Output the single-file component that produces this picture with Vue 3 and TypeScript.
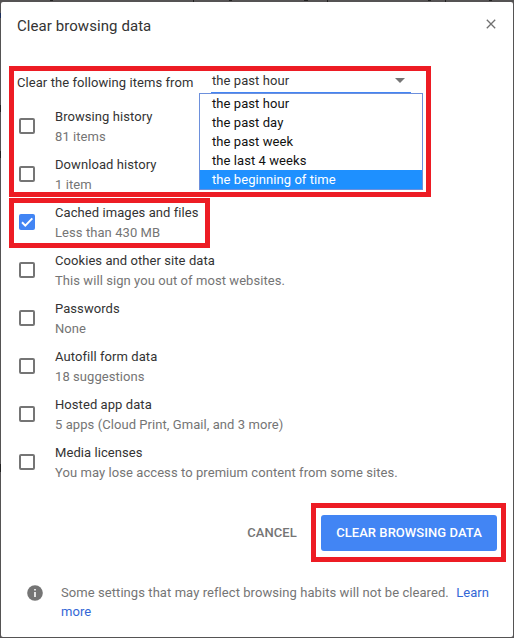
<script setup lang="ts">
import { ref } from 'vue'

interface Item {
  title: string
  detail: string
  checked: boolean
}

const items = ref<Item[]>([
  { title: 'Browsing history', detail: '81 items', checked: false },
  { title: 'Download history', detail: '1 item', checked: false },
  { title: 'Cached images and files', detail: 'Less than 430 MB', checked: true },
  { title: 'Cookies and other site data', detail: 'This will sign you out of most websites.', checked: false },
  { title: 'Passwords', detail: 'None', checked: false },
  { title: 'Autofill form data', detail: '18 suggestions', checked: false },
  { title: 'Hosted app data', detail: '5 apps (Cloud Print, Gmail, and 3 more)', checked: false },
  { title: 'Media licenses', detail: 'You may lose access to premium content from some sites.', checked: false },
])

const periods = ['the past hour', 'the past day', 'the past week', 'the last 4 weeks', 'the beginning of time']
const selected = ref(periods[0])
const highlighted = ref(periods[4])
</script>

<template>
  <div class="backdrop">
    <section class="dialog" role="dialog">
      <header class="header">
        <h1 class="title">Clear browsing data</h1>
        <svg class="close" width="10" height="10" viewBox="0 0 10 10">
          <path d="M.8.8 9.2 9.2M9.2.8.8 9.2" stroke="#707070" stroke-width="1.3" fill="none" />
        </svg>
      </header>

      <div class="period">
        <span class="period-label">Clear the following items from</span>
        <div class="select">
          <span class="select-value">{{ selected }}</span>
          <svg class="arrow" width="10" height="5" viewBox="0 0 10 5"><path d="M0 0h10L5 5z" fill="#757575" /></svg>
          <ul class="menu">
            <li
              v-for="period in periods"
              :key="period"
              class="option"
              :class="{ active: period === highlighted }"
              @mouseenter="highlighted = period"
              @click="selected = period"
            >{{ period }}</li>
          </ul>
        </div>
      </div>

      <ul class="items">
        <li v-for="item in items" :key="item.title" class="item" @click="item.checked = !item.checked">
          <span class="checkbox" :class="{ checked: item.checked }">
            <svg v-if="item.checked" width="16" height="16" viewBox="0 0 16 16">
              <path d="M3 8.3 6.3 11.6 13.3 4.4" fill="none" stroke="#fff" stroke-width="2" />
            </svg>
          </span>
          <div class="item-text">
            <div class="item-title">{{ item.title }}</div>
            <div class="item-detail">{{ item.detail }}</div>
          </div>
        </li>
      </ul>

      <div class="actions">
        <button class="button cancel">CANCEL</button>
        <button class="button primary">CLEAR BROWSING DATA</button>
      </div>

      <footer class="footer">
        <svg class="info" width="16" height="16" viewBox="0 0 16 16">
          <circle cx="8" cy="8" r="7.8" fill="#757575" />
          <path d="M7.2 4h1.6v1.6H7.2zM7.2 7.1h1.6V12H7.2z" fill="#fff" />
        </svg>
        <p class="note"><span class="note-text">Some settings that may reflect browsing habits will not be cleared.</span> <a class="link">Learn more</a></p>
      </footer>
    </section>

    <div class="mark mark-period"></div>
    <div class="mark mark-cache"></div>
    <div class="mark mark-submit"></div>
  </div>
</template>

<style>
body {
  margin: 0;
}
</style>

<style scoped>
.backdrop {
  position: relative;
  box-sizing: border-box;
  width: 514px;
  height: 638px;
  padding: 2px 1px 1px;
  overflow: hidden;
  background:
    linear-gradient(#1c2f5c, #1c2f5c) 0 13px / 1px 5px no-repeat,
    linear-gradient(#222, #222) 0 105px / 1px 7px no-repeat,
    linear-gradient(#222, #222) 0 151px / 1px 7px no-repeat,
    linear-gradient(#222, #222) 0 464px / 1px 8px no-repeat,
    linear-gradient(#222, #222) 50px 0 / 3px 1px no-repeat,
    linear-gradient(#222, #222) 193px 0 / 1px 2px no-repeat,
    linear-gradient(#222, #222) 229px 0 / 3px 1px no-repeat,
    linear-gradient(#222, #222) 304px 0 / 4px 1px no-repeat,
    linear-gradient(#222, #222) 327px 0 / 1px 2px no-repeat,
    linear-gradient(#222, #222) 428px 0 / 3px 1px no-repeat,
    linear-gradient(#222, #222) 445px 0 / 1px 2px no-repeat,
    linear-gradient(#222, #222) 489px 0 / 3px 1px no-repeat,
    #555354;
  font-family: Roboto, "Liberation Sans", sans-serif;
  font-size: 13px;
  letter-spacing: 0.07px;
  color: #333;
}
.dialog {
  display: flex;
  flex-direction: column;
  height: 635px;
  border-radius: 2px;
  background: #fff;
}
.header {
  display: flex;
  justify-content: space-between;
  height: 68px;
  padding: 14px 17px 0 16px;
  box-sizing: border-box;
}
.title {
  margin: 0;
  font-size: 15px;
  font-weight: 400;
  line-height: 20px;
}
.close {
  margin-top: 3px;
}
.period {
  display: flex;
  height: 33px;
  padding-left: 16px;
}
.period-label {
  width: 194px;
  padding-top: 3px;
  line-height: 20px;
  white-space: nowrap;
}
.select {
  position: relative;
  display: flex;
  justify-content: space-between;
  box-sizing: border-box;
  width: 200px;
  height: 24px;
  padding: 1px 6px 0 1px;
  border-bottom: 2px solid #4285f4;
  line-height: 19px;
}
.arrow {
  margin-top: 7px;
}
.menu {
  position: absolute;
  z-index: 1;
  top: 23px;
  left: -12px;
  box-sizing: border-box;
  width: 224px;
  margin: 0;
  padding: 0;
  border: 1px solid #6d90dc;
  background: #fff;
  list-style: none;
  color: #111;
}
.option {
  height: 19px;
  padding-left: 12px;
  line-height: 19px;
}
.option.active {
  background: #1e90ff;
  color: #fff;
}
.items {
  margin: 0;
  padding: 0;
  list-style: none;
}
.item {
  display: flex;
  align-items: center;
  height: 48px;
  padding-left: 18px;
}
.checkbox {
  box-sizing: border-box;
  width: 16px;
  height: 16px;
  margin: 0 20px 2px 0;
  border: 2px solid #757575;
  border-radius: 2px;
}
.checkbox.checked {
  border: 0;
  background: #4285f4;
}
.checkbox svg {
  display: block;
}
.item-text {
  line-height: 20px;
}
.item-detail {
  color: #757575;
}
.actions {
  display: flex;
  justify-content: flex-end;
  padding: 28px 16px 0 0;
}
.button {
  height: 36px;
  padding: 0;
  border: 0;
  border-radius: 3px;
  background: none;
  font: 500 13px/36px Roboto, "Liberation Sans", sans-serif;
  letter-spacing: 0.05px;
  color: #757575;
}
.cancel {
  width: 98px;
}
.primary {
  width: 176px;
  background: #4285f4;
  color: #fff;
}
.footer {
  display: flex;
  padding: 32px 14px 0 26px;
}
.info {
  flex: none;
  margin: 2px 18px 0 0;
}
.note {
  margin: 0;
  line-height: 19px;
  color: #757575;
}
.note-text {
  margin-right: 4px;
}
.link {
  color: #3367d6;
}
.mark {
  position: absolute;
  z-index: 2;
  box-sizing: border-box;
  border: 5px solid #ed1c24;
  pointer-events: none;
}
.mark-period {
  top: 66px;
  left: 9px;
  width: 422px;
  height: 131px;
}
.mark-cache {
  top: 198px;
  left: 9px;
  width: 201px;
  height: 50px;
}
.mark-submit {
  top: 503px;
  left: 311px;
  width: 195px;
  height: 59px;
}
</style>
